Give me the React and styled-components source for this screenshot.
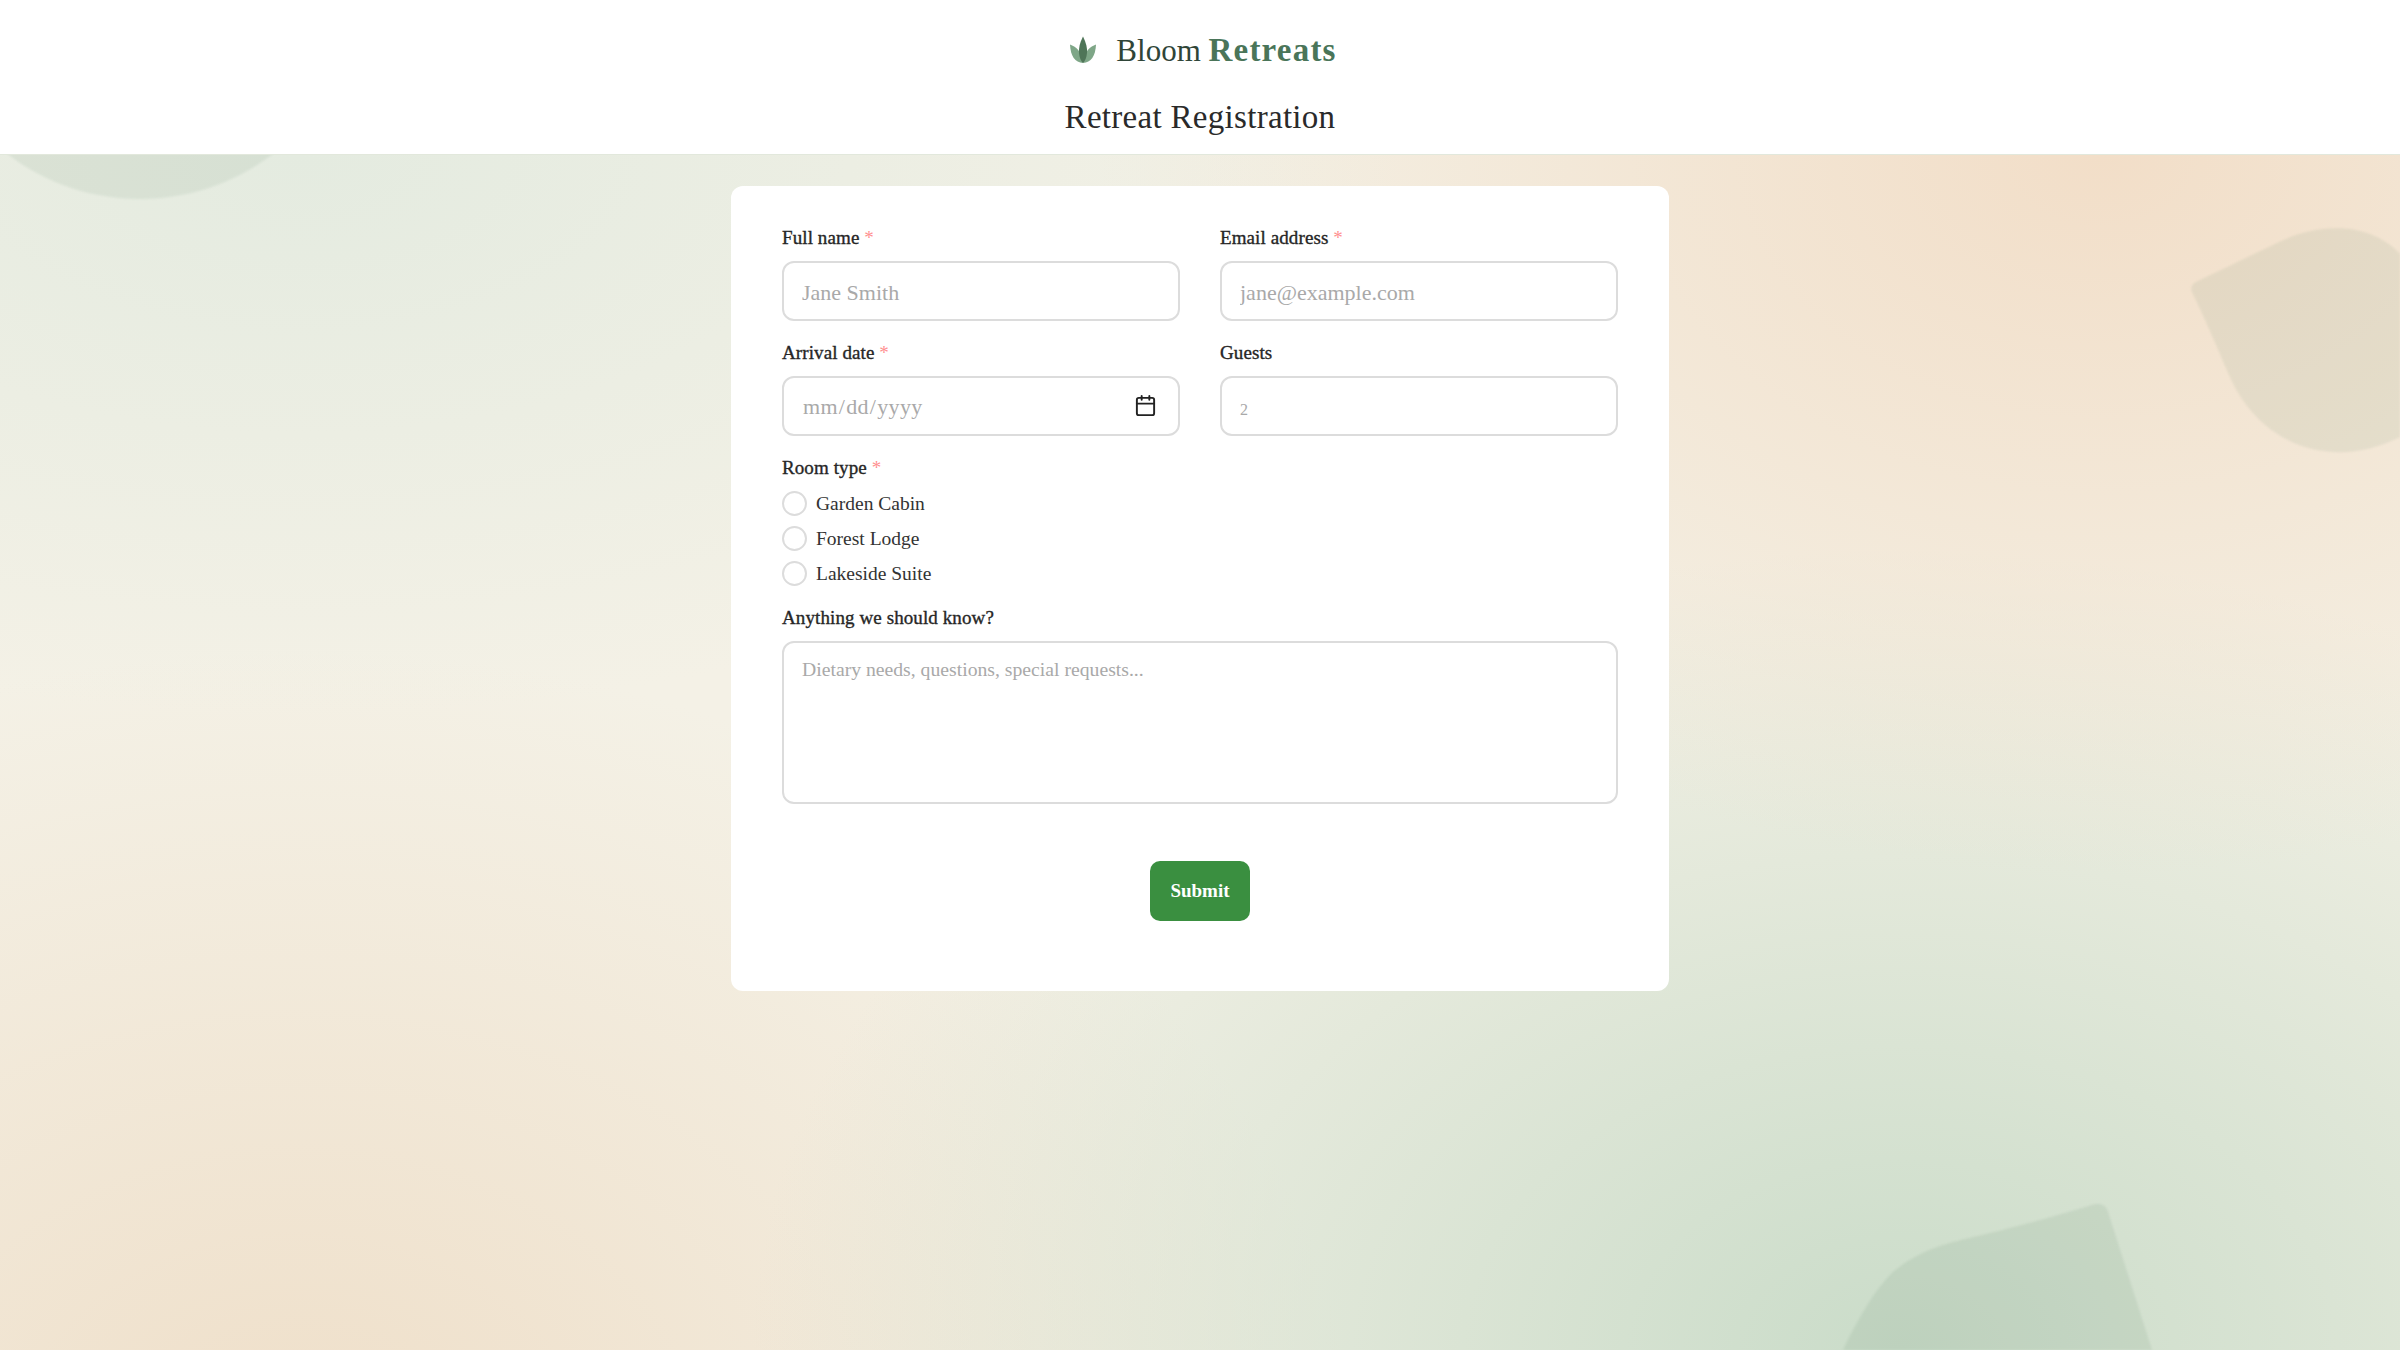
import React from "react";
import styled, { createGlobalStyle } from "styled-components";
import { Calendar } from "lucide-react";

const GlobalStyle = createGlobalStyle`
  html, body {
    margin: 0;
    padding: 0;
  }
  * {
    box-sizing: border-box;
  }
  body {
    font-family: "Liberation Serif", "Times New Roman", serif;
    color: #262626;
  }
`;

const LogoMark = () => (
  <Mark viewBox="0 0 28 28" aria-hidden="true">
    <path d="M1 8.5C6.5 10.5 13 15 14 27C6 26.5 1.5 20 1 8.5Z" fill="#7ea687" />
    <path d="M27 8.5C21.5 10.5 15 15 14 27C22 26.5 26.5 20 27 8.5Z" fill="#7ea687" />
    <path d="M14 0.5C10.8 6.5 9.6 12 10 17C10.4 21.5 12 25 14 27C16 25 17.6 21.5 18 17C18.4 12 17.2 6.5 14 0.5Z" fill="#4f7558" />
  </Mark>
);

const Backdrop = () => (
  <Shapes viewBox="0 0 2400 1350" aria-hidden="true">
    <circle cx="140" cy="-19" r="218" fill="#4a7559" fillOpacity="0.09" />
    <path
      d="M2196 282C2230 266 2258 252 2286 239C2326 222 2372 224 2400 254L2470 340L2400 437C2330 472 2260 444 2230 377C2216 345 2204 316 2192 292C2190 288 2192 284 2196 282Z"
      fill="#4a7559"
      fillOpacity="0.09"
    />
    <path
      d="M2092 1205C2098 1203 2106 1204 2108 1212L2152 1350L2160 1400H1830L1843 1350C1860 1315 1875 1290 1893 1272C1912 1256 1930 1249 1950 1243C1975 1236 2017 1228 2092 1205Z"
      fill="#4a7559"
      fillOpacity="0.1"
    />
  </Shapes>
);

export default function App() {
  return (
    <>
      <GlobalStyle />
      <Page>
        <Backdrop />
        <Header>
          <Brand>
            <LogoMark />
            <BrandName>
              Bloom <strong>Retreats</strong>
            </BrandName>
          </Brand>
          <PageTitle>Retreat Registration</PageTitle>
        </Header>
        <Main>
          <Card>
            <Field>
              <Label htmlFor="name">
                Full name <Req>*</Req>
              </Label>
              <Input id="name" type="text" placeholder="Jane Smith" />
            </Field>
            <Field>
              <Label htmlFor="email">
                Email address <Req>*</Req>
              </Label>
              <Input id="email" type="email" placeholder="jane@example.com" />
            </Field>
            <Field>
              <Label htmlFor="arrival">
                Arrival date <Req>*</Req>
              </Label>
              <DateBox>
                <DateInput id="arrival" type="date" />
                <DateIcon size={23} strokeWidth={2} />
              </DateBox>
            </Field>
            <Field>
              <Label htmlFor="guests">Guests</Label>
              <GuestsInput id="guests" type="number" placeholder="2" />
            </Field>
            <FullField>
              <Label as="span">
                Room type <Req>*</Req>
              </Label>
              <RadioList>
                {["Garden Cabin", "Forest Lodge", "Lakeside Suite"].map((room) => (
                  <RadioRow key={room}>
                    <Radio type="radio" name="room" value={room} />
                    {room}
                  </RadioRow>
                ))}
              </RadioList>
            </FullField>
            <FullField>
              <Label htmlFor="notes">Anything we should know?</Label>
              <Textarea
                id="notes"
                placeholder="Dietary needs, questions, special requests..."
              />
            </FullField>
            <Actions>
              <Submit type="button">Submit</Submit>
            </Actions>
          </Card>
        </Main>
      </Page>
    </>
  );
}

const Page = styled.div`
  position: relative;
  height: 1350px;
  overflow: hidden;
  background:
    radial-gradient(ellipse 1100px 560px at 300px 155px, #e4ebe0, rgba(228, 235, 224, 0)),
    radial-gradient(ellipse 1000px 720px at 2100px 155px, #f2dec8, rgba(242, 222, 200, 0)),
    radial-gradient(ellipse 1150px 800px at 1900px 1350px, #cadcc9, rgba(202, 220, 201, 0)),
    radial-gradient(ellipse 1050px 800px at 300px 1450px, #efdfc9, rgba(239, 223, 201, 0)),
    #f4f1e6;
`;

const Shapes = styled.svg`
  position: absolute;
  inset: 0;
  width: 100%;
  height: 100%;
  filter: blur(1px);
`;

const Header = styled.header`
  position: relative;
  height: 155px;
  display: flex;
  flex-direction: column;
  align-items: center;
  background: #fff;
  border-bottom: 1px solid #e2e8dc;
`;

const Brand = styled.div`
  display: flex;
  align-items: center;
  gap: 19px;
  height: 36px;
  margin-top: 32px;
  margin-left: 6px;
`;

const Mark = styled.svg`
  width: 28px;
  height: 28px;
`;

const BrandName = styled.div`
  font-size: 31px;
  color: #2f4538;

  strong {
    color: #4a7559;
    font-size: 33px;
    font-weight: 700;
    letter-spacing: 1.2px;
  }
`;

const PageTitle = styled.h1`
  margin: 28px 0 0;
  font-size: 33px;
  line-height: 42px;
  font-weight: 400;
  letter-spacing: 0.3px;
  color: #2a2a2a;
`;

const Main = styled.main`
  position: relative;
  display: flex;
  justify-content: center;
  padding-top: 31px;
`;

const Card = styled.form`
  width: 938px;
  height: 805px;
  padding: 41px 51px 70px;
  display: grid;
  grid-template-columns: 1fr 1fr;
  column-gap: 40px;
  row-gap: 21px;
  align-content: start;
  background: #fff;
  border-radius: 12px;
`;

const Field = styled.div`
  display: flex;
  flex-direction: column;
`;

const FullField = styled(Field)`
  grid-column: 1 / -1;
`;

const Label = styled.label`
  display: block;
  height: 22px;
  margin-bottom: 12px;
  font-size: 19px;
  line-height: 22px;
  letter-spacing: 0.1px;
  -webkit-text-stroke: 0.35px #262626;
  color: #262626;
`;

const Req = styled.span`
  color: #ff8f8f;
  -webkit-text-stroke: 0;
`;

const Input = styled.input`
  width: 100%;
  height: 60px;
  padding: 3px 18px 0;
  border: 2px solid #dcdcdc;
  border-radius: 12px;
  background: #fff;
  font-family: inherit;
  font-size: 22px;
  color: #262626;
  outline: none;

  &::placeholder {
    color: #a9a9a9;
    opacity: 1;
  }
`;

const DateBox = styled.div`
  position: relative;
`;

const DateInput = styled(Input)`
  padding-top: 1px;
  letter-spacing: 0.3px;

  &::-webkit-datetime-edit {
    color: #a9a9a9;
  }
  &::-webkit-calendar-picker-indicator {
    opacity: 0;
  }
`;

const DateIcon = styled(Calendar)`
  position: absolute;
  top: 18px;
  right: 23px;
  color: #222;
  pointer-events: none;
`;

const GuestsInput = styled(Input)`
  padding-top: 8px;
  font-size: 16px;
`;

const RadioList = styled.div`
  display: flex;
  flex-direction: column;
  gap: 10px;
`;

const RadioRow = styled.label`
  display: flex;
  align-items: center;
  gap: 9px;
  height: 25px;
  font-size: 19.5px;
  color: #333;
`;

const Radio = styled.input`
  appearance: none;
  width: 25px;
  height: 25px;
  margin: 0;
  border: 2px solid #dcdcdc;
  border-radius: 50%;
  background: #fff;
`;

const Textarea = styled.textarea`
  display: block;
  width: 100%;
  height: 163px;
  padding: 14px 18px;
  border: 2px solid #dcdcdc;
  border-radius: 12px;
  resize: none;
  font-family: inherit;
  font-size: 19.7px;
  line-height: 24px;
  outline: none;

  &::placeholder {
    color: #a9a9a9;
    opacity: 1;
  }
`;

const Actions = styled.div`
  grid-column: 1 / -1;
  display: flex;
  justify-content: center;
  margin-top: 36px;
`;

const Submit = styled.button`
  width: 100px;
  height: 60px;
  border: none;
  border-radius: 10px;
  background: #3a8f40;
  color: #fff;
  font-family: inherit;
  font-size: 19px;
  font-weight: 700;
`;
